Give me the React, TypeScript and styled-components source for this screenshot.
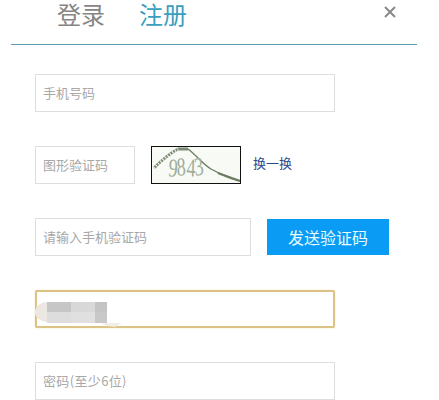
import styled, { createGlobalStyle } from "styled-components";

const GlobalStyle = createGlobalStyle`
  html, body {
    margin: 0;
    padding: 0;
    height: 400px;
    overflow: hidden;
    background: #fff;
    font-family: "Noto Sans CJK SC", "Liberation Sans", sans-serif;
  }
  * {
    box-sizing: border-box;
  }
`;

const Wrapper = styled.div`
  width: 439px;
  height: 400px;
  padding: 0 22px 0 11px;
  overflow: hidden;
`;

const Header = styled.div`
  display: flex;
  align-items: flex-start;
  width: 406px;
  height: 45px;
  padding-left: 46px;
  border-bottom: 1px solid #5a9fb3;
`;

const Tab = styled.div<{ $active?: boolean }>`
  width: 48px;
  margin-right: 34px;
  font-size: 24px;
  line-height: 28px;
  color: ${(props) => (props.$active ? "#3a9fbf" : "#858585")};
`;

const CloseBtn = styled.div`
  display: flex;
  margin: 6px 21px 0 auto;
  color: #888;
  cursor: pointer;
`;

const Form = styled.div`
  display: flex;
  flex-direction: column;
  gap: 34px;
  padding: 29px 0 0 24px;
`;

const Row = styled.div`
  display: flex;
  align-items: center;
`;

const Input = styled.input<{ $width?: number; $tracking?: number }>`
  display: block;
  width: ${(props) => props.$width ?? 300}px;
  height: 38px;
  padding: 0 7px 2px;
  border: 1px solid #dedede;
  outline: none;
  background: #fff;
  font-family: inherit;
  font-size: 13px;
  letter-spacing: ${(props) => props.$tracking ?? 0}px;
  color: #555;
  &::placeholder {
    color: #a8a8a8;
    opacity: 1;
  }
`;

const FocusedField = styled.div`
  position: relative;
  width: 300px;
  height: 38px;
  border: 2px solid #dcc285;
  border-radius: 2px;
  box-shadow: 0 0 2px #f0e2bd;
  background: #fff;
`;

const Mosaic = styled.svg`
  position: absolute;
  left: -2px;
  top: 8px;
`;

const Captcha = styled.svg`
  display: block;
  margin-left: 16px;
  border: 1px solid #111;
  background: #f8fbf5;
`;

const RefreshLink = styled.a`
  margin: 0 0 6px 12px;
  font-size: 13px;
  color: #2b4a8b;
  cursor: pointer;
`;

const SendBtn = styled.button`
  width: 122px;
  height: 36px;
  margin-left: 16px;
  padding: 0 0 1px;
  border: 0;
  background: #0a9bf5;
  font-family: inherit;
  font-size: 16px;
  color: #e9fbff;
  cursor: pointer;
`;

function App() {
  return (
    <Wrapper>
      <GlobalStyle />
      <Header>
        <Tab>登录</Tab>
        <Tab $active>注册</Tab>
        <CloseBtn>
          <svg width="12" height="12" viewBox="0 0 12 12">
            <path d="M1 1L11 11M11 1L1 11" stroke="currentColor" strokeWidth="2" fill="none" />
          </svg>
        </CloseBtn>
      </Header>
      <Form>
        <Input placeholder="手机号码" />
        <Row>
          <Input $width={100} placeholder="图形验证码" />
          <Captcha width="90" height="38" viewBox="0 0 88 36">
            <path d="M2 21C9 14 18 6 26 2L36 2" stroke="#7d8c76" strokeWidth="3" fill="none" />
            <path d="M2 21C9 14 18 6 26 2" stroke="#f8fbf5" strokeWidth="3" strokeDasharray="1 2" fill="none" />
            <path d="M36 2C44 8 51 17 59 22C68 27 78 31 88 34" stroke="#6a7c62" strokeWidth="1.4" fill="none" />
            <path d="M66 26C73 29 80 31 88 34" stroke="#6a7c62" strokeWidth="2.4" fill="none" />
            <text
              transform="translate(16 29) scale(0.7 1)"
              fontFamily="Liberation Serif"
              fontSize="26"
              fill="#a0ad9b"
              rotate="6 -4 3 -8"
            >
              9843
            </text>
          </Captcha>
          <RefreshLink>换一换</RefreshLink>
        </Row>
        <Row>
          <Input $width={216} placeholder="请输入手机验证码" />
          <SendBtn>发送验证码</SendBtn>
        </Row>
        <FocusedField>
          <Mosaic width="90" height="28" viewBox="0 0 90 28">
            <ellipse cx="12" cy="12" rx="12" ry="10" fill="#ece8e1" />
            <rect x="12" y="2" width="24" height="10" fill="#c6c6c6" />
            <rect x="36" y="2" width="24" height="10" fill="#d8d8d8" />
            <rect x="60" y="2" width="12" height="10" fill="#c4c4c4" />
            <rect x="12" y="12" width="24" height="11" fill="#dddddd" />
            <rect x="36" y="12" width="24" height="11" fill="#e0e0e0" />
            <rect x="60" y="12" width="12" height="11" fill="#c8c8c8" />
            <path d="M66 23L87 23L80 27L72 26Z" fill="#f1eee7" />
          </Mosaic>
        </FocusedField>
        <Input $tracking={0.35} placeholder="密码(至少6位)" />
      </Form>
    </Wrapper>
  );
}

export default App;
